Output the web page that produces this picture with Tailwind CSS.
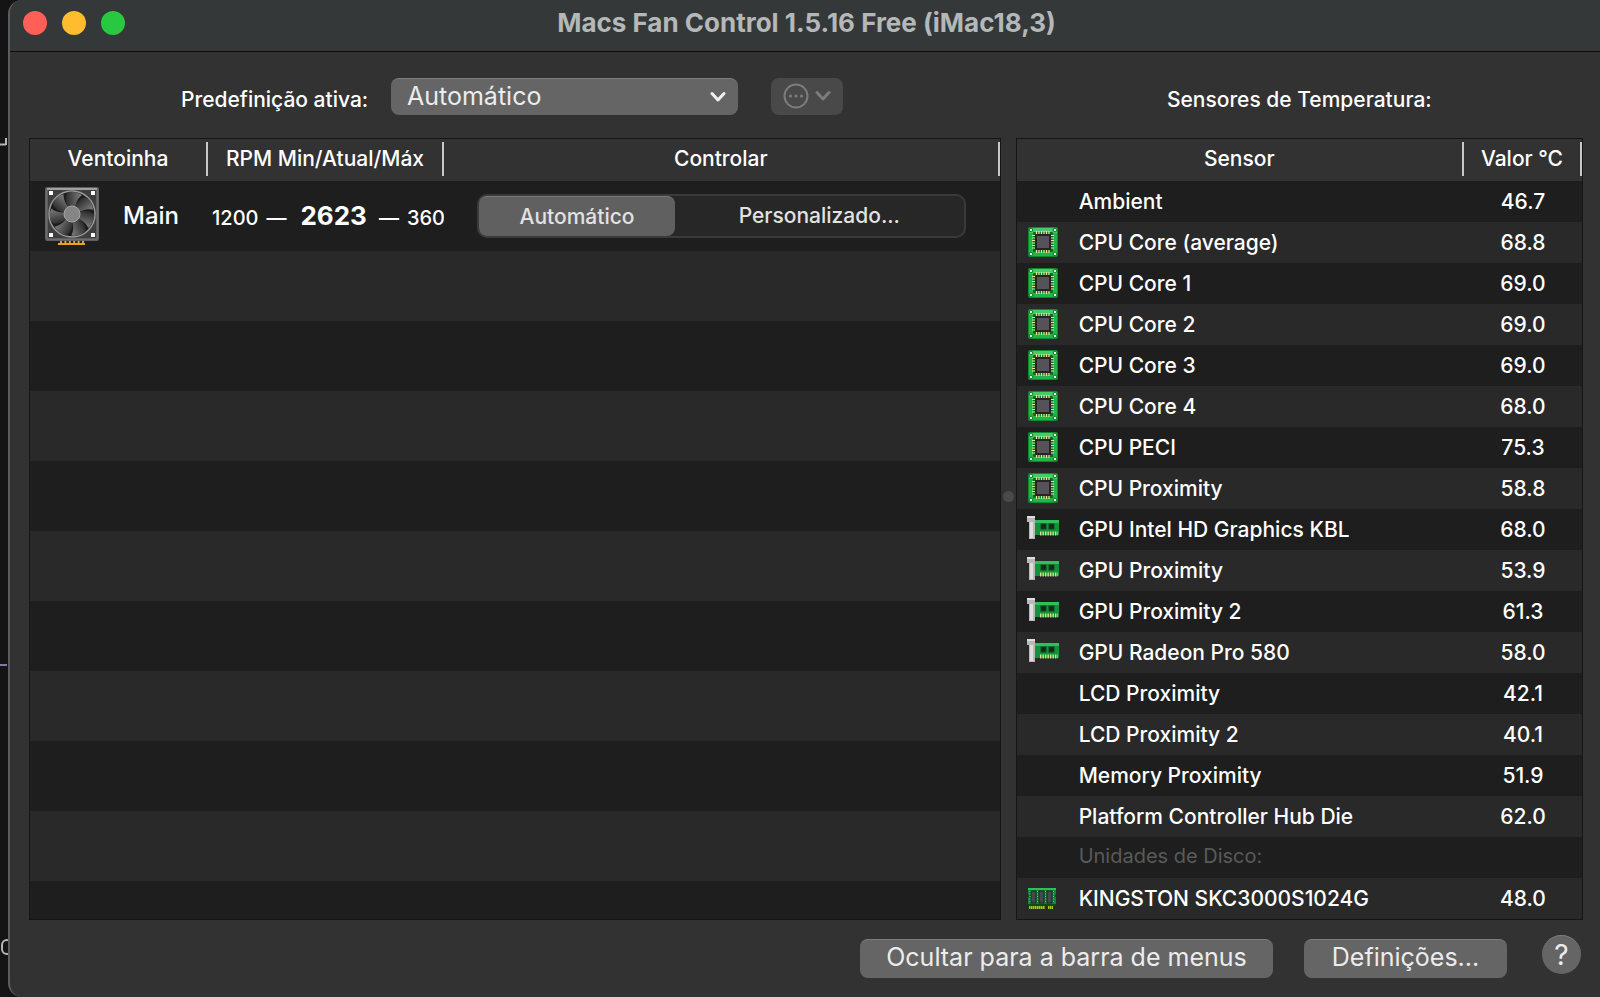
<!DOCTYPE html>
<html lang="pt">
  <head>
    <meta charset="UTF-8" />
    <meta name="viewport" content="width=device-width, initial-scale=1.0" />
    <title>Macs Fan Control 1.5.16 Free (iMac18,3)</title>
    <script src="https://cdn.jsdelivr.net/npm/@tailwindcss/browser@4"></script>
  </head>
  <body
    class="bg-[#141414] font-['Inter','Liberation_Sans',sans-serif] text-white"
  >
    <!-- icons, not display: none or the fan's gradient is lost -->
    <svg class="absolute size-0">
      <symbol id="icon-cpu" viewBox="0 0 32 32">
        <rect x="1" y="1" width="30" height="30" rx="2" fill="#0c8a2c" />
        <rect x="2" y="2" width="28" height="28" rx="2" fill="#1fb548" />
        <path d="M2 4a2 2 0 0 1 2-2h24a2 2 0 0 1 2 2v3H2z" fill="#45cc68" />
        <g fill="#e9ffe9" stroke="#0b7a26">
          <circle cx="4" cy="4" r="1.8" />
          <circle cx="28" cy="4" r="1.8" />
          <circle cx="4" cy="28" r="1.8" />
          <circle cx="28" cy="28" r="1.8" />
        </g>
        <rect x="6" y="6" width="20" height="20" rx="1" fill="#0c6a22" />
        <path
          d="M9.5 5v22M12 5v22M14.5 5v22M17 5v22M19.5 5v22M22 5v22M5 9.5h22M5 12h22M5 14.5h22M5 17h22M5 19.5h22M5 22h22"
          stroke="#e6e79a"
          stroke-width="1.2"
        />
        <rect x="8" y="8" width="16" height="16" fill="#2c2226" />
        <rect x="10" y="10" width="12" height="12" fill="#55525a" />
      </symbol>
      <symbol id="icon-gpu" viewBox="0 0 32 26">
        <rect x="8" y="5" width="24" height="15" fill="#139238" />
        <rect x="8" y="5" width="24" height="3" fill="#2fc05a" />
        <path d="M0 1h8v23H2V7H0z" fill="#b9b9b9" />
        <path d="M0 1h8v2H0zM3 7h3v16H3z" fill="#dedede" />
        <g fill="#17251b" stroke="#0a4a1a">
          <rect x="14" y="9" width="5" height="5" />
          <rect x="22" y="9" width="5" height="5" />
        </g>
        <path
          d="M13 18.5h18"
          stroke="#d3e08a"
          stroke-width="4"
          stroke-dasharray="1.4 1.1"
        />
      </symbol>
      <symbol id="icon-ssd" viewBox="0 0 30 23">
        <path d="M1 1h28v6l-1 2 1 2v8H1v-8l1-2-1-2z" fill="#12853a" />
        <rect x="1" y="1" width="28" height="2" fill="#27c25a" />
        <g fill="#4a4650" stroke="#222">
          <rect x="4" y="4" width="5" height="12" />
          <rect x="12" y="4" width="5" height="12" />
          <rect x="20" y="4" width="5" height="12" />
        </g>
        <path
          d="M3 4v12M10.5 4v12M18.5 4v12M26.5 4v12"
          stroke="#4fd67c"
          stroke-dasharray="1 1.5"
        />
        <rect x="1" y="17" width="28" height="2" fill="#064d18" />
        <path
          d="M2 20.500h16M21 20.500h5"
          stroke="#a3c418"
          stroke-width="3"
          stroke-dasharray="1.6 .4"
        />
      </symbol>
      <linearGradient id="blade-fill" x1="0" x2="1" y1="0" y2="0">
        <stop offset="0" stop-color="#2c2c2c" />
        <stop offset="1" stop-color="#808080" />
      </linearGradient>
      <symbol id="icon-fan" viewBox="0 0 54 60">
        <rect width="54" height="54" rx="2" fill="#606060" />
        <rect x="2" y="2" width="50" height="50" rx="1" fill="#3f3f3f" stroke="#7c7c7c" />
        <path d="M2 2h50" stroke="#a0a0a0" stroke-width="2" />
        <circle cx="27" cy="27" r="23" fill="#1c1c1c" stroke="#9a9a9a" stroke-width="1.5" />
        <path id="blade" d="M24 21C20 16 20 9 23 5C28 4 33 5 37 8C32 12 31 16 30 21z" fill="url(#blade-fill)" />
        <use href="#blade" transform="rotate(51 27 27)" />
        <use href="#blade" transform="rotate(103 27 27)" />
        <use href="#blade" transform="rotate(154 27 27)" />
        <use href="#blade" transform="rotate(206 27 27)" />
        <use href="#blade" transform="rotate(257 27 27)" />
        <use href="#blade" transform="rotate(309 27 27)" />
        <circle cx="27" cy="27" r="8" fill="#858585" stroke="#a5a5a5" />
        <g fill="#fff">
          <rect x="4" y="4" width="4" height="4" />
          <rect x="46" y="4" width="4" height="4" />
          <rect x="4" y="46" width="4" height="4" />
          <rect x="46" y="46" width="4" height="4" />
        </g>
        <path d="M13 57h27" stroke="#f0a01e" stroke-width="2" />
        <path d="M15 55h24" stroke="#f0a01e" stroke-width="2" stroke-dasharray="2 2.4" />
      </symbol>
    </svg>

    <div class="relative h-screen overflow-hidden pl-2">
      <!-- desktop behind the window -->
      <svg class="absolute left-0 top-[138px] h-2 w-[7px]" viewBox="0 0 7 8">
        <path d="M0 6.5h6M6 0v7" fill="none" stroke="#b5b5b5" stroke-width="2" />
      </svg>
      <div class="absolute left-0 top-[664px] h-[2px] w-[7px] bg-[#7d7aa8]"></div>
      <div
        class="absolute left-[1px] top-[939px] h-4 w-3 rounded-full border-2 border-[#b5b5b5]"
      ></div>

      <div
        class="relative flex h-full flex-col overflow-hidden rounded-l-[14px] border-l-2 border-[#5c5c5c] bg-[#323232]"
      >
        <header
          class="flex h-[52px] shrink-0 items-center border-b border-[#0c0c0c] bg-[#353839] pb-[6px] pl-[13px] pr-[10px]"
        >
          <div class="flex flex-1 gap-[15px]">
            <button type="button" aria-label="Fechar" class="size-6 rounded-full bg-[#ff5f57]"></button>
            <button type="button" aria-label="Minimizar" class="size-6 rounded-full bg-[#febc2e]"></button>
            <button type="button" aria-label="Ampliar" class="size-6 rounded-full bg-[#28c840]"></button>
          </div>
          <h1 class="text-[26px] leading-8 font-bold text-[#b4b8b9]">
            Macs Fan Control 1.5.16 Free (iMac18,3)
          </h1>
          <div class="flex-1"></div>
        </header>

        <main
          class="grid min-h-0 flex-1 grid-cols-[971fr_15px_567fr] pl-[19px] pr-[17px]"
        >
          <!-- fans -->
          <section class="flex min-h-0 flex-col">
            <div class="flex h-[86px] shrink-0 items-center pl-[152px] pt-[2px]">
              <label for="preset" class="w-[188px] whitespace-nowrap pt-2 text-[21px] font-medium">Predefinição ativa:</label>
              <div class="relative ml-[22px] w-[347px]">
                <select
                  id="preset"
                  class="block h-[37px] w-full appearance-none rounded-lg border-t border-[#7d7d7d] bg-[#656565] px-4 pb-[2px] text-[25px] leading-8 text-[#ececec]"
                >
                  <option>Automático</option>
                </select>
                <svg class="pointer-events-none absolute right-3 top-[13px] h-3 w-4" viewBox="0 0 16 12" fill="none">
                  <path d="M2 2.500 8 9l6-6.500" stroke="#f0f0f0" stroke-width="3" stroke-linecap="round" stroke-linejoin="round" />
                </svg>
              </div>
              <button
                type="button"
                disabled
                aria-label="Mais opções"
                class="ml-[33px] flex h-[37px] w-[72px] items-center justify-center gap-[6px] rounded-lg bg-[#494949]"
              >
                <svg class="size-[26px]" viewBox="0 0 26 26">
                  <circle cx="13" cy="13" r="11.5" fill="none" stroke="#7c7c7c" stroke-width="2" />
                  <g fill="#7c7c7c">
                    <circle cx="7.5" cy="13" r="1.6" />
                    <circle cx="13" cy="13" r="1.6" />
                    <circle cx="18.5" cy="13" r="1.6" />
                  </g>
                </svg>
                <svg class="h-3 w-4" viewBox="0 0 16 12" fill="none">
                  <path d="M2 2.500 8 9l6-6.500" stroke="#7c7c7c" stroke-width="3" stroke-linecap="round" stroke-linejoin="round" />
                </svg>
              </button>
            </div>
            <div class="min-h-0 flex-1 overflow-hidden border border-[#161616]">
              <table class="w-full table-fixed font-medium">
                <colgroup>
                  <col class="w-[178px]" />
                  <col class="w-[236px]" />
                  <col />
                </colgroup>
                <thead class="text-[21px]">
                  <tr class="h-[42px]">
                    <th class="p-0 font-medium"><div class="mb-[2px] h-[34px] border-r-2 border-[#c8c8c8] leading-[34px]">Ventoinha</div></th>
                    <th class="p-0 font-medium"><div class="mb-[2px] h-[34px] border-r-2 border-[#c8c8c8] leading-[34px]">RPM Min/Atual/Máx</div></th>
                    <th class="p-0 font-medium"><div class="mb-[2px] h-[34px] border-r-2 border-[#c8c8c8] leading-[34px]">Controlar</div></th>
                  </tr>
                </thead>
                <tbody id="fans">
                  <tr class="h-[70px] bg-[#1e1e1e]">
                    <td class="p-0">
                      <div class="flex items-center gap-6 pl-[15px]">
                        <svg class="mt-[2px] h-[60px] w-[54px]"><use href="#icon-fan" /></svg>
                        <span class="text-2xl">Main</span>
                      </div>
                    </td>
                    <td class="overflow-hidden whitespace-nowrap p-0 pl-1 text-xl">
                      <div class="flex items-baseline overflow-hidden">
                        <span>1200</span>
                        <span class="ml-2">—</span>
                        <strong class="ml-[14px] text-[26px]">2623</strong>
                        <span class="ml-3">—</span>
                        <span class="ml-2">3600</span>
                      </div>
                    </td>
                    <td class="p-0 pl-[33px] pr-[34px]">
                      <div
                        class="flex h-[44px] rounded-[10px] border-2 border-[#3a3a3a] bg-[#272727] text-[21px] text-[#e2e2e2]"
                      >
                        <button type="button" class="w-[196px] rounded-lg border-t border-[#7a7a7a] bg-[#606060]">Automático</button>
                        <button type="button" class="flex-1">Personalizado...</button>
                      </div>
                    </td>
                  </tr>
                </tbody>
              </table>
            </div>
          </section>

          <!-- splitter -->
          <div class="flex items-center justify-center pt-5">
            <div class="size-[11px] rounded-full bg-[#4a4a4a]"></div>
          </div>

          <!-- sensors -->
          <section class="flex min-h-0 flex-col">
            <h2 class="flex h-[86px] shrink-0 items-center justify-center pt-[10px] text-[21px] font-medium">
              Sensores de Temperatura:
            </h2>
            <div class="min-h-0 flex-1 overflow-hidden border border-[#161616]">
              <table class="h-full w-full table-fixed text-[21px] font-medium">
                <colgroup>
                  <col />
                  <col class="w-[118px]" />
                </colgroup>
                <thead>
                  <tr class="h-[42px]">
                    <th class="p-0 font-medium"><div class="mb-[2px] h-[34px] border-r-2 border-[#c8c8c8] leading-[34px]">Sensor</div></th>
                    <th class="p-0 font-medium"><div class="mb-[2px] h-[34px] border-r-2 border-[#c8c8c8] leading-[34px]">Valor °C</div></th>
                  </tr>
                </thead>
                <tbody id="sensors"></tbody>
              </table>
            </div>
          </section>
        </main>

        <footer class="flex h-[77px] shrink-0 items-start justify-end pr-[19px] pt-[15px]">
          <button
            type="button"
            class="mt-1 h-[39px] w-[413px] rounded-lg border-t border-[#7d7d7d] bg-[#656565] pb-1 text-[25px] leading-8 text-[#ececec]"
          >
            Ocultar para a barra de menus
          </button>
          <button
            type="button"
            class="ml-[31px] mt-1 h-[39px] w-[203px] rounded-lg border-t border-[#7d7d7d] bg-[#656565] pb-1 text-[25px] leading-8 text-[#ececec]"
          >
            Definições...
          </button>
          <button
            type="button"
            aria-label="Ajuda"
            class="ml-[35px] size-[39px] rounded-full border-t border-[#7d7d7d] bg-[#656565] text-[28px] leading-9 text-[#ececec]"
          >
            ?
          </button>
        </footer>
      </div>
    </div>

    <script>
      const sensors = [
        ["", "Ambient", "46.7"],
        ["cpu", "CPU Core (average)", "68.8"],
        ["cpu", "CPU Core 1", "69.0"],
        ["cpu", "CPU Core 2", "69.0"],
        ["cpu", "CPU Core 3", "69.0"],
        ["cpu", "CPU Core 4", "68.0"],
        ["cpu", "CPU PECI", "75.3"],
        ["cpu", "CPU Proximity", "58.8"],
        ["gpu", "GPU Intel HD Graphics KBL", "68.0"],
        ["gpu", "GPU Proximity", "53.9"],
        ["gpu", "GPU Proximity 2", "61.3"],
        ["gpu", "GPU Radeon Pro 580", "58.0"],
        ["", "LCD Proximity", "42.1"],
        ["", "LCD Proximity 2", "40.1"],
        ["", "Memory Proximity", "51.9"],
        ["", "Platform Controller Hub Die", "62.0"],
        ["", "Unidades de Disco:", ""],
        ["ssd", "KINGSTON SKC3000S1024G", "48.0"],
      ];

      const icons = {
        "": "",
        cpu: '<svg class="mb-[2px] size-8"><use href="#icon-cpu" /></svg>',
        gpu: '<svg class="mb-1 h-[26px] w-8"><use href="#icon-gpu" /></svg>',
        ssd: '<svg class="h-[23px] w-[30px]"><use href="#icon-ssd" /></svg>',
      };

      document.getElementById("sensors").innerHTML = sensors
        .map(([icon, name, value]) => {
          // rows without a value are group titles
          const style = value ? "text-white" : "pb-1 text-xl font-normal text-[#5a5a5a]";
          return `
            <tr class="h-10 odd:bg-[#1e1e1e] even:bg-[#292929]">
              <td class="p-0">
                <div class="flex h-10 items-center whitespace-nowrap pl-[10px] ${style}">
                  <span class="flex w-[52px] items-center">${icons[icon]}</span>
                  ${name}
                </div>
              </td>
              <td class="p-0 text-center">${value}</td>
            </tr>`;
        })
        .join("");

      // empty striped rows down to the bottom of the fan list
      const fans = document.getElementById("fans");
      for (let i = 0; i < 10; i++) {
        const stripe = i % 2 ? "bg-[#1e1e1e]" : "bg-[#292929]";
        fans.insertAdjacentHTML(
          "beforeend",
          `<tr class="h-[70px] ${stripe}"><td colspan="3"></td></tr>`
        );
      }
    </script>
  </body>
</html>
